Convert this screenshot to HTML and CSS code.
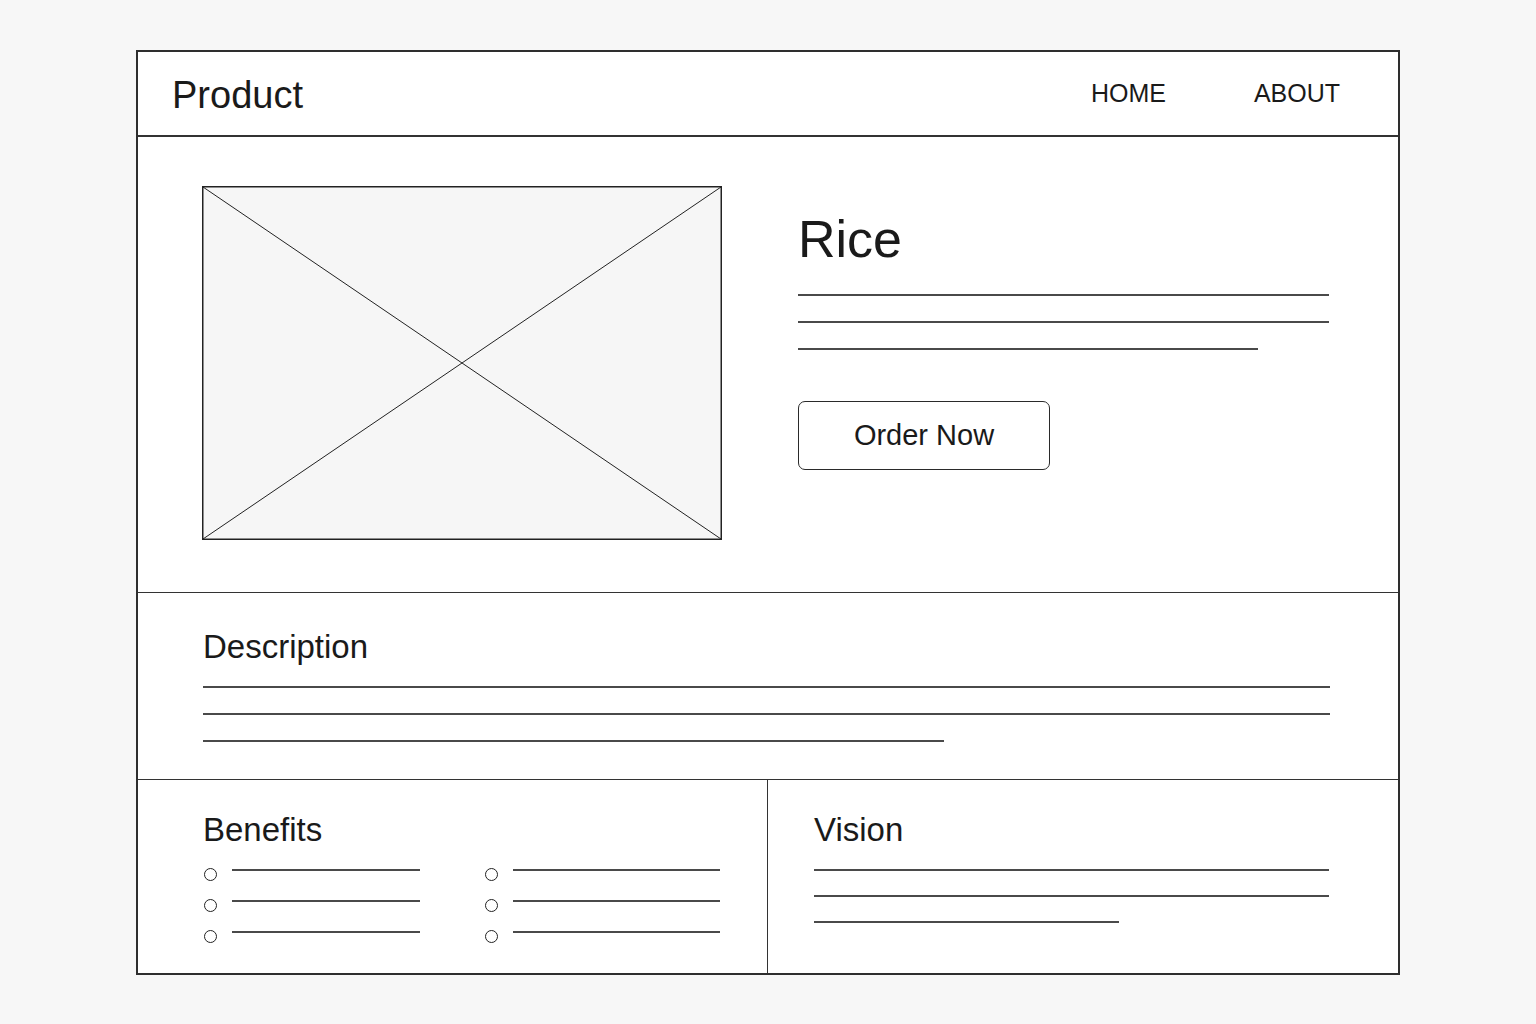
FILE: index.html
```html
<!DOCTYPE html>
<html lang="en">
<head>
    <meta charset="UTF-8">
    <meta name="viewport" content="width=device-width, initial-scale=1.0">
    <title>Product - Rice</title>
    <link rel="stylesheet" href="styles.css">
</head>
<body>
    <div class="frame">
        <header>
            <div class="brand">Product</div>
            <nav>
                <a href="#">HOME</a>
                <a href="#">ABOUT</a>
            </nav>
        </header>

        <section class="hero">
            <div class="picture">
                <svg width="520" height="354" viewBox="0 0 520 354">
                    <rect x="0.75" y="0.75" width="518.5" height="352.5" fill="#f6f6f6" stroke="#222" stroke-width="1.5"/>
                    <line x1="1" y1="1" x2="519" y2="353" stroke="#222" stroke-width="1"/>
                    <line x1="519" y1="1" x2="1" y2="353" stroke="#222" stroke-width="1"/>
                </svg>
            </div>
            <div class="summary">
                <h1>Rice</h1>
                <div class="lines hero-lines">
                    <div class="line"></div>
                    <div class="line"></div>
                    <div class="line short"></div>
                </div>
                <button>Order Now</button>
            </div>
        </section>

        <section class="description">
            <h2>Description</h2>
            <div class="lines desc-lines">
                <div class="line"></div>
                <div class="line"></div>
                <div class="line short"></div>
            </div>
        </section>

        <section class="bottom">
            <div class="benefits">
                <h2>Benefits</h2>
                <ul class="bullets">
                    <li><span class="dot"></span><span class="line"></span></li>
                    <li><span class="dot"></span><span class="line"></span></li>
                    <li><span class="dot"></span><span class="line"></span></li>
                </ul>
                <ul class="bullets wide">
                    <li><span class="dot"></span><span class="line"></span></li>
                    <li><span class="dot"></span><span class="line"></span></li>
                    <li><span class="dot"></span><span class="line"></span></li>
                </ul>
            </div>
            <div class="vision">
                <h2>Vision</h2>
                <div class="lines vision-lines">
                    <div class="line"></div>
                    <div class="line"></div>
                    <div class="line short"></div>
                </div>
            </div>
        </section>
    </div>
</body>
</html>
```

FILE: styles.css
```css
body { font-family: 'Liberation Sans', Arial, sans-serif; background: #f7f7f7; color: #1a1a1a; margin: 0; padding: 50px 0 0 136px; }
.frame { width: 1264px; box-sizing: border-box; border: 2px solid #2e2e2e; background: #fff; }

header { height: 83px; display: flex; align-items: center; justify-content: space-between; border-bottom: 2px solid #333; padding: 0 58px 0 34px; }
.brand { font-size: 38px; line-height: 1; margin-top: 3px; }
nav { display: flex; gap: 88px; margin-top: -1px; }
nav a { color: #1a1a1a; text-decoration: none; font-size: 25px; }

.hero { display: flex; padding: 49px 0 52px 64px; border-bottom: 1px solid #333; }
.picture svg { display: block; }
.summary { margin-left: 76px; padding-top: 27px; }
h1 { font-size: 52px; font-weight: normal; line-height: 1; margin: 0; }

.lines { display: flex; flex-direction: column; }
.line { display: block; height: 2px; background: #4a4a4a; }
.hero-lines { width: 531px; margin-top: 29px; gap: 25px; }
.hero-lines .short { width: 460px; }

button { margin-top: 51px; width: 252px; height: 69px; background: #fff; border: 1.5px solid #2a2a2a; border-radius: 7px; font-family: inherit; font-size: 29px; color: #1a1a1a; cursor: pointer; }

h2 { font-size: 33px; font-weight: normal; line-height: 1; margin: 0; }
.description { padding: 37px 0 37px 65px; border-bottom: 1px solid #333; }
.desc-lines { width: 1127px; margin-top: 23px; gap: 25px; }
.desc-lines .short { width: 741px; }

.bottom { display: grid; grid-template-columns: 630px 1fr; }
.benefits { padding: 33px 0 30px 66px; border-right: 1px solid #333; display: grid; grid-template-columns: 281px 1fr; }
.benefits h2 { grid-column: 1 / 3; margin-left: -1px; }
.bullets { list-style: none; margin: 23px 0 0; padding: 0; display: flex; flex-direction: column; gap: 19px; }
.bullets li { display: flex; align-items: flex-start; gap: 15px; height: 12px; }
.dot { box-sizing: border-box; width: 13px; height: 13px; border: 1.5px solid #222; border-radius: 50%; margin-top: -1px; flex: none; }
.bullets .line { width: 188px; }
.bullets.wide .line { width: 207px; }

.vision { padding: 33px 0 0 46px; }
.vision-lines { width: 515px; margin-top: 23px; gap: 24px; }
.vision-lines .short { width: 305px; }
```
